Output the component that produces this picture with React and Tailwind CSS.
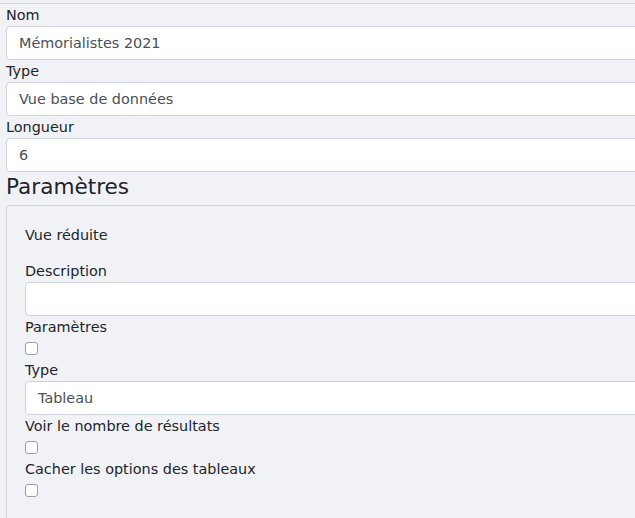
import React from "react";

const Label = ({ children }) => (
  <div className="text-[14.4px] leading-[22px] text-[#212529]">{children}</div>
);

const Field = ({ value }) => (
  <div className="h-[34px] w-full rounded-[4px] border border-[#ced4da] bg-white px-3 text-[14.4px] leading-[32px] text-[#495057]">
    {value}
  </div>
);

const Check = () => (
  <div className="h-[21px] pt-[4px]">
    <div className="h-[13px] w-[13px] rounded-[3px] border border-[#9aa0a6] bg-white" />
  </div>
);

const App = () => {
  return (
    <div
      className="h-[518px] w-full overflow-hidden bg-[#f1f2f6]"
      style={{ fontFamily: '"DejaVu Sans", Verdana, sans-serif' }}
    >
      <div className="pt-[3px]">
        <div className="w-[700px] border-t border-[#d3d7dd] pl-[6px]">
          <Label>Nom</Label>
          <Field value="Mémorialistes 2021" />
          <Label>Type</Label>
          <Field value="Vue base de données" />
          <Label>Longueur</Label>
          <Field value="6" />
          <h2 className="mb-[3px] text-[21.6px] leading-[30px] text-[#212529]">Paramètres</h2>

          {/* panneau des paramètres */}
          <div className="rounded-tl-[3px] border-l border-t border-[#d3d7dd] pl-[18px] pt-[18px] pb-10">
            <div className="mb-[14px] text-[14.4px] leading-[22px] text-[#212529]">Vue réduite</div>
            <Label>Description</Label>
            <Field value="" />
            <Label>Paramètres</Label>
            <Check />
            <Label>Type</Label>
            <Field value="Tableau" />
            <Label>Voir le nombre de résultats</Label>
            <Check />
            <Label>Cacher les options des tableaux</Label>
            <Check />
          </div>
        </div>
      </div>
    </div>
  );
};

export default App;
